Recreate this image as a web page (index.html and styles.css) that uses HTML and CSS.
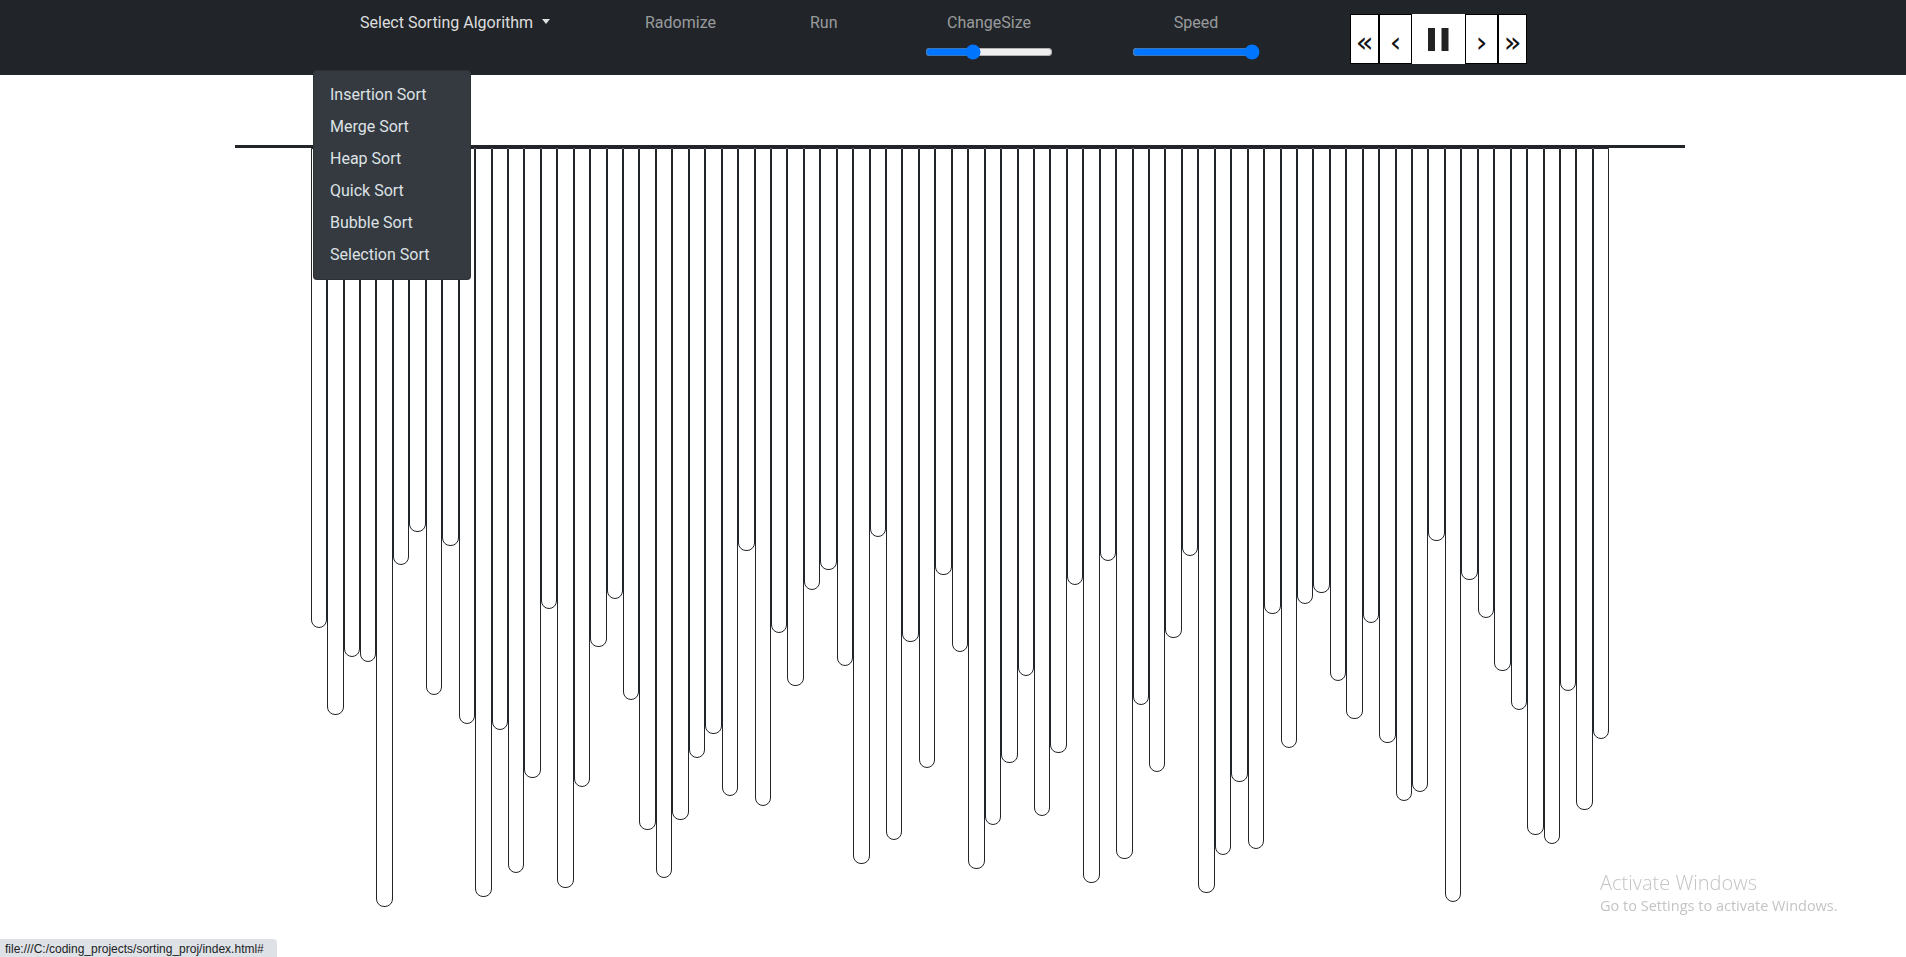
FILE: index.html
```html
<!DOCTYPE html>
<html lang="en">
<head>
<meta charset="utf-8">
<title>Sorting Visualizer</title>
<link rel="stylesheet" href="styles.css">
</head>
<body>
<nav class="navbar">
  <div class="dropdown">
    <a class="toggle" href="#">Select Sorting Algorithm<span class="caret"></span></a>
    <div class="menu">
      <a class="menu-item" href="#">Insertion Sort</a>
      <a class="menu-item" href="#">Merge Sort</a>
      <a class="menu-item" href="#">Heap Sort</a>
      <a class="menu-item" href="#">Quick Sort</a>
      <a class="menu-item" href="#">Bubble Sort</a>
      <a class="menu-item" href="#">Selection Sort</a>
    </div>
  </div>
  <a class="nav-link link-random" href="#">Radomize</a>
  <a class="nav-link link-run" href="#">Run</a>
  <div class="control control-size">
    <span class="control-label">ChangeSize</span>
    <input class="range" type="range" min="0" max="100" value="36">
  </div>
  <div class="control control-speed">
    <span class="control-label">Speed</span>
    <input class="range" type="range" min="0" max="100" value="100">
  </div>
  <div class="player">
    <button class="pbtn pbtn-edge"><span class="glyph">&laquo;</span></button>
    <button class="pbtn pbtn-step"><span class="glyph">&lsaquo;</span></button>
    <button class="pbtn pbtn-pause"><svg class="pause-icon" width="21" height="23" viewBox="0 0 21 23"><rect x="0" y="0" width="7" height="23" fill="#222"/><rect x="13.5" y="0" width="7" height="23" fill="#222"/></svg></button>
    <button class="pbtn pbtn-step"><span class="glyph">&rsaquo;</span></button>
    <button class="pbtn pbtn-edge"><span class="glyph">&raquo;</span></button>
  </div>
</nav>

<main class="stage">
  <div class="bars">
    <div class="bar" style="height:480px"></div>
    <div class="bar" style="height:567px"></div>
    <div class="bar" style="height:509px"></div>
    <div class="bar" style="height:514px"></div>
    <div class="bar" style="height:759px"></div>
    <div class="bar" style="height:417px"></div>
    <div class="bar" style="height:384px"></div>
    <div class="bar" style="height:547px"></div>
    <div class="bar" style="height:398px"></div>
    <div class="bar" style="height:576px"></div>
    <div class="bar" style="height:749px"></div>
    <div class="bar" style="height:582px"></div>
    <div class="bar" style="height:725px"></div>
    <div class="bar" style="height:630px"></div>
    <div class="bar" style="height:461px"></div>
    <div class="bar" style="height:740px"></div>
    <div class="bar" style="height:639px"></div>
    <div class="bar" style="height:499px"></div>
    <div class="bar" style="height:451px"></div>
    <div class="bar" style="height:552px"></div>
    <div class="bar" style="height:682px"></div>
    <div class="bar" style="height:730px"></div>
    <div class="bar" style="height:672px"></div>
    <div class="bar" style="height:610px"></div>
    <div class="bar" style="height:586px"></div>
    <div class="bar" style="height:648px"></div>
    <div class="bar" style="height:403px"></div>
    <div class="bar" style="height:658px"></div>
    <div class="bar" style="height:485px"></div>
    <div class="bar" style="height:538px"></div>
    <div class="bar" style="height:442px"></div>
    <div class="bar" style="height:422px"></div>
    <div class="bar" style="height:518px"></div>
    <div class="bar" style="height:716px"></div>
    <div class="bar" style="height:389px"></div>
    <div class="bar" style="height:692px"></div>
    <div class="bar" style="height:494px"></div>
    <div class="bar" style="height:620px"></div>
    <div class="bar" style="height:427px"></div>
    <div class="bar" style="height:504px"></div>
    <div class="bar" style="height:721px"></div>
    <div class="bar" style="height:677px"></div>
    <div class="bar" style="height:615px"></div>
    <div class="bar" style="height:528px"></div>
    <div class="bar" style="height:668px"></div>
    <div class="bar" style="height:605px"></div>
    <div class="bar" style="height:437px"></div>
    <div class="bar" style="height:735px"></div>
    <div class="bar" style="height:413px"></div>
    <div class="bar" style="height:711px"></div>
    <div class="bar" style="height:557px"></div>
    <div class="bar" style="height:624px"></div>
    <div class="bar" style="height:490px"></div>
    <div class="bar" style="height:408px"></div>
    <div class="bar" style="height:745px"></div>
    <div class="bar" style="height:707px"></div>
    <div class="bar" style="height:634px"></div>
    <div class="bar" style="height:701px"></div>
    <div class="bar" style="height:466px"></div>
    <div class="bar" style="height:600px"></div>
    <div class="bar" style="height:456px"></div>
    <div class="bar" style="height:445px"></div>
    <div class="bar" style="height:533px"></div>
    <div class="bar" style="height:571px"></div>
    <div class="bar" style="height:475px"></div>
    <div class="bar" style="height:595px"></div>
    <div class="bar" style="height:653px"></div>
    <div class="bar" style="height:644px"></div>
    <div class="bar" style="height:393px"></div>
    <div class="bar" style="height:754px"></div>
    <div class="bar" style="height:432px"></div>
    <div class="bar" style="height:470px"></div>
    <div class="bar" style="height:523px"></div>
    <div class="bar" style="height:562px"></div>
    <div class="bar" style="height:687px"></div>
    <div class="bar" style="height:696px"></div>
    <div class="bar" style="height:543px"></div>
    <div class="bar" style="height:662px"></div>
    <div class="bar" style="height:591px"></div>
  </div>
</main>

<div class="watermark">
  <div class="wm-title">Activate Windows</div>
  <div class="wm-sub">Go to Settings to activate Windows.</div>
</div>

<div class="statusbar">file:///C:/coding_projects/sorting_proj/index.html#</div>
</body>
</html>
```

FILE: styles.css
```css
html, body {
  margin: 0;
  padding: 0;
  background: #ffffff;
}

body {
  font-family: Roboto, "Liberation Sans", sans-serif;
  font-size: 16px;
  line-height: 24px;
  color: #212529;
  overflow: hidden;
  height: 957px;
}

a {
  text-decoration: none;
}

/* ---------- navbar ---------- */
.navbar {
  height: 75px;
  background: #212529;
  display: flex;
  align-items: flex-start;
  padding-left: 360px;
  box-sizing: border-box;
}

.dropdown {
  position: relative;
  width: 285px;
  flex: none;
  padding-top: 11px;
}

.toggle {
  color: rgba(255, 255, 255, 0.86);
  white-space: nowrap;
}

.caret {
  display: inline-block;
  margin-left: 9px;
  vertical-align: 4px;
  border-top: 5px solid rgba(255, 255, 255, 0.86);
  border-left: 4.8px solid transparent;
  border-right: 4.8px solid transparent;
}

.menu {
  position: absolute;
  left: -47px;
  top: 70px;
  width: 158px;
  box-sizing: border-box;
  padding: 8px 0;
  background: #343a40;
  border: 1px solid rgba(0, 0, 0, 0.15);
  border-radius: 4px;
  z-index: 10;
}

.menu-item {
  display: block;
  padding: 4px 16px;
  line-height: 24px;
  color: #dee2e6;
  white-space: nowrap;
}

.nav-link {
  flex: none;
  padding-top: 11px;
  color: rgba(255, 255, 255, 0.55);
}

.link-random {
  width: 165px;
}

.link-run {
  width: 115px;
}

.control {
  flex: none;
  display: flex;
  flex-direction: column;
  align-items: center;
  padding-top: 11px;
}

.control-speed {
  margin-left: 79px;
}

.control-label {
  color: rgba(255, 255, 255, 0.55);
  line-height: 24px;
}

.range {
  width: 128px;
  height: 16px;
  margin: 9px 0 0;
}

.player {
  flex: none;
  display: flex;
  margin-left: 90px;
  margin-top: 14px;
}

.pbtn {
  height: 50px;
  margin: 0;
  padding: 0;
  background: #ffffff;
  border: 1px solid #000;
  border-radius: 0;
  color: #111;
  font-family: "DejaVu Sans", sans-serif;
  font-size: 29px;
  line-height: 40px;
  display: flex;
  align-items: center;
  justify-content: center;
}

.glyph {
  display: block;
  margin-top: 6px;
}

.pbtn-edge {
  width: 29px;
}

.pbtn-step {
  width: 33px;
}

.pbtn-pause {
  width: 53px;
  border-color: #ffffff;
}

.pause-icon {
  display: block;
}

/* ---------- bars ---------- */
.stage {
  margin: 70px 0 0 235px;
  width: 1450px;
  border-top: 3px solid #212529;
}

.bars {
  display: flex;
  justify-content: center;
  align-items: flex-start;
}

.bar {
  flex: none;
  width: 16.44px;
  box-sizing: border-box;
  border: 1px solid #212529;
  border-radius: 0 0 8px 8px;
  background: #ffffff;
}

/* ---------- overlays ---------- */
.watermark {
  position: fixed;
  left: 1600px;
  top: 869px;
  color: #c4c4c4;
  font-family: "Open Sans", "Noto Sans", sans-serif;
  font-weight: 300;
}

.wm-title {
  font-size: 20px;
  line-height: 27px;
}

.wm-sub {
  font-size: 14.5px;
  line-height: 20px;
  font-weight: 400;
}

.statusbar {
  position: fixed;
  left: 0;
  bottom: 0;
  height: 18px;
  padding: 0 13px 0 5px;
  background: #dee1e6;
  border-top-right-radius: 4px;
  color: #202124;
  font-family: "Liberation Sans", Arial, sans-serif;
  font-size: 12px;
  line-height: 20px;
  white-space: nowrap;
}
```
